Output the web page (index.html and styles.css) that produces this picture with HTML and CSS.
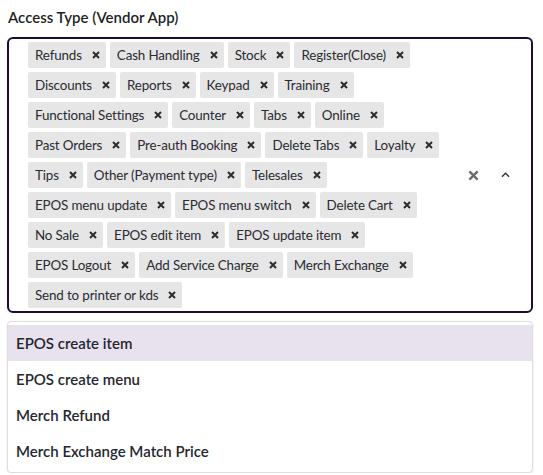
FILE: index.html
```html
<!DOCTYPE html>
<html lang="en">
<head>
<meta charset="utf-8">
<title>Access Type</title>
<link rel="stylesheet" href="styles.css">
</head>
<body>
<div class="field">
  <label class="label">Access Type (Vendor App)</label>
  <div class="control">
    <div class="values">
      <span class="chip"><span class="chip-text">Refunds</span><svg class="chip-x" viewBox="0 0 8 8"><path d="M1 1L7 7M7 1L1 7"/></svg></span>
      <span class="chip"><span class="chip-text">Cash Handling</span><svg class="chip-x" viewBox="0 0 8 8"><path d="M1 1L7 7M7 1L1 7"/></svg></span>
      <span class="chip"><span class="chip-text">Stock</span><svg class="chip-x" viewBox="0 0 8 8"><path d="M1 1L7 7M7 1L1 7"/></svg></span>
      <span class="chip"><span class="chip-text">Register(Close)</span><svg class="chip-x" viewBox="0 0 8 8"><path d="M1 1L7 7M7 1L1 7"/></svg></span>
      <span class="chip"><span class="chip-text">Discounts</span><svg class="chip-x" viewBox="0 0 8 8"><path d="M1 1L7 7M7 1L1 7"/></svg></span>
      <span class="chip"><span class="chip-text">Reports</span><svg class="chip-x" viewBox="0 0 8 8"><path d="M1 1L7 7M7 1L1 7"/></svg></span>
      <span class="chip"><span class="chip-text">Keypad</span><svg class="chip-x" viewBox="0 0 8 8"><path d="M1 1L7 7M7 1L1 7"/></svg></span>
      <span class="chip"><span class="chip-text">Training</span><svg class="chip-x" viewBox="0 0 8 8"><path d="M1 1L7 7M7 1L1 7"/></svg></span>
      <span class="chip"><span class="chip-text">Functional Settings</span><svg class="chip-x" viewBox="0 0 8 8"><path d="M1 1L7 7M7 1L1 7"/></svg></span>
      <span class="chip"><span class="chip-text">Counter</span><svg class="chip-x" viewBox="0 0 8 8"><path d="M1 1L7 7M7 1L1 7"/></svg></span>
      <span class="chip"><span class="chip-text">Tabs</span><svg class="chip-x" viewBox="0 0 8 8"><path d="M1 1L7 7M7 1L1 7"/></svg></span>
      <span class="chip"><span class="chip-text">Online</span><svg class="chip-x" viewBox="0 0 8 8"><path d="M1 1L7 7M7 1L1 7"/></svg></span>
      <span class="chip"><span class="chip-text">Past Orders</span><svg class="chip-x" viewBox="0 0 8 8"><path d="M1 1L7 7M7 1L1 7"/></svg></span>
      <span class="chip"><span class="chip-text">Pre-auth Booking</span><svg class="chip-x" viewBox="0 0 8 8"><path d="M1 1L7 7M7 1L1 7"/></svg></span>
      <span class="chip"><span class="chip-text">Delete Tabs</span><svg class="chip-x" viewBox="0 0 8 8"><path d="M1 1L7 7M7 1L1 7"/></svg></span>
      <span class="chip"><span class="chip-text">Loyalty</span><svg class="chip-x" viewBox="0 0 8 8"><path d="M1 1L7 7M7 1L1 7"/></svg></span>
      <span class="chip"><span class="chip-text">Tips</span><svg class="chip-x" viewBox="0 0 8 8"><path d="M1 1L7 7M7 1L1 7"/></svg></span>
      <span class="chip"><span class="chip-text">Other (Payment type)</span><svg class="chip-x" viewBox="0 0 8 8"><path d="M1 1L7 7M7 1L1 7"/></svg></span>
      <span class="chip"><span class="chip-text">Telesales</span><svg class="chip-x" viewBox="0 0 8 8"><path d="M1 1L7 7M7 1L1 7"/></svg></span>
      <span class="chip"><span class="chip-text">EPOS menu update</span><svg class="chip-x" viewBox="0 0 8 8"><path d="M1 1L7 7M7 1L1 7"/></svg></span>
      <span class="chip"><span class="chip-text">EPOS menu switch</span><svg class="chip-x" viewBox="0 0 8 8"><path d="M1 1L7 7M7 1L1 7"/></svg></span>
      <span class="chip"><span class="chip-text">Delete Cart</span><svg class="chip-x" viewBox="0 0 8 8"><path d="M1 1L7 7M7 1L1 7"/></svg></span>
      <span class="chip"><span class="chip-text">No Sale</span><svg class="chip-x" viewBox="0 0 8 8"><path d="M1 1L7 7M7 1L1 7"/></svg></span>
      <span class="chip"><span class="chip-text">EPOS edit item</span><svg class="chip-x" viewBox="0 0 8 8"><path d="M1 1L7 7M7 1L1 7"/></svg></span>
      <span class="chip"><span class="chip-text">EPOS update item</span><svg class="chip-x" viewBox="0 0 8 8"><path d="M1 1L7 7M7 1L1 7"/></svg></span>
      <span class="chip"><span class="chip-text">EPOS Logout</span><svg class="chip-x" viewBox="0 0 8 8"><path d="M1 1L7 7M7 1L1 7"/></svg></span>
      <span class="chip"><span class="chip-text">Add Service Charge</span><svg class="chip-x" viewBox="0 0 8 8"><path d="M1 1L7 7M7 1L1 7"/></svg></span>
      <span class="chip"><span class="chip-text">Merch Exchange</span><svg class="chip-x" viewBox="0 0 8 8"><path d="M1 1L7 7M7 1L1 7"/></svg></span>
      <span class="chip"><span class="chip-text">Send to printer or kds</span><svg class="chip-x" viewBox="0 0 8 8"><path d="M1 1L7 7M7 1L1 7"/></svg></span>
    </div>
    <div class="indicators">
      <span class="ind"><svg class="clear-icon" viewBox="0 0 12 12"><path d="M1.5 1.5L10.5 10.5M10.5 1.5L1.5 10.5"/></svg></span>
      <span class="ind"><svg class="chev-icon" viewBox="0 0 10 6"><path d="M1 5L5 1L9 5"/></svg></span>
    </div>
  </div>
  <div class="menu">
    <div class="option focused">EPOS create item</div>
    <div class="option">EPOS create menu</div>
    <div class="option">Merch Refund</div>
    <div class="option">Merch Exchange Match Price</div>
  </div>
</div>
</body>
</html>
```

FILE: styles.css
```css
* { box-sizing: border-box; }
html, body { margin: 0; padding: 0; background: #ffffff; }
body {
  font-family: "Lato", "Liberation Sans", sans-serif;
  color: #26262e;
}
.field {
  padding: 7px 10px 0 7px;
}
.label {
  display: block;
  padding-left: 1px;
  font-size: 15px;
  line-height: 20px;
  font-weight: 600;
  color: #1f1f24;
  margin-bottom: 10px;
}
.control {
  display: flex;
  border: 2px solid #1c0b36;
  border-radius: 6px;
  background: #fff;
}
.values {
  flex: 1;
  display: flex;
  flex-wrap: wrap;
  gap: 4px;
  padding: 3px 8px 3px 19px;
}
.chip {
  display: inline-flex;
  align-items: center;
  height: 26px;
  padding: 0 6px 0 7px;
  gap: 10px;
  background: #e6e6e6;
  border-radius: 2px;
  font-size: 13.4px;
  letter-spacing: -0.15px;
  color: #2b2b31;
  white-space: nowrap;
}
.chip-x {
  width: 8px;
  height: 8px;
  fill: none;
  stroke: #2b2b31;
  stroke-width: 2;
}
.indicators {
  display: flex;
  align-items: center;
  gap: 12px;
  padding-right: 16px;
}
.ind {
  width: 20px;
  height: 20px;
  display: flex;
  align-items: center;
  justify-content: center;
}
.clear-icon {
  width: 11px;
  height: 11px;
  fill: none;
  stroke: #6a6a6a;
  stroke-width: 2.6;
}
.chev-icon {
  width: 9px;
  height: 6px;
  fill: none;
  stroke: #333;
  stroke-width: 1.5;
}
.menu {
  margin-top: 8px;
  border: 1px solid #dedede;
  border-radius: 4px;
  box-shadow: 0 1px 3px rgba(0,0,0,0.08);
  padding: 3px 0;
  background: #fff;
}
.option {
  height: 36px;
  display: flex;
  align-items: center;
  padding-left: 8px;
  font-size: 15px;
  font-weight: 600;
  color: #26262e;
}
.option.focused {
  background: #e8e2ee;
}
```
